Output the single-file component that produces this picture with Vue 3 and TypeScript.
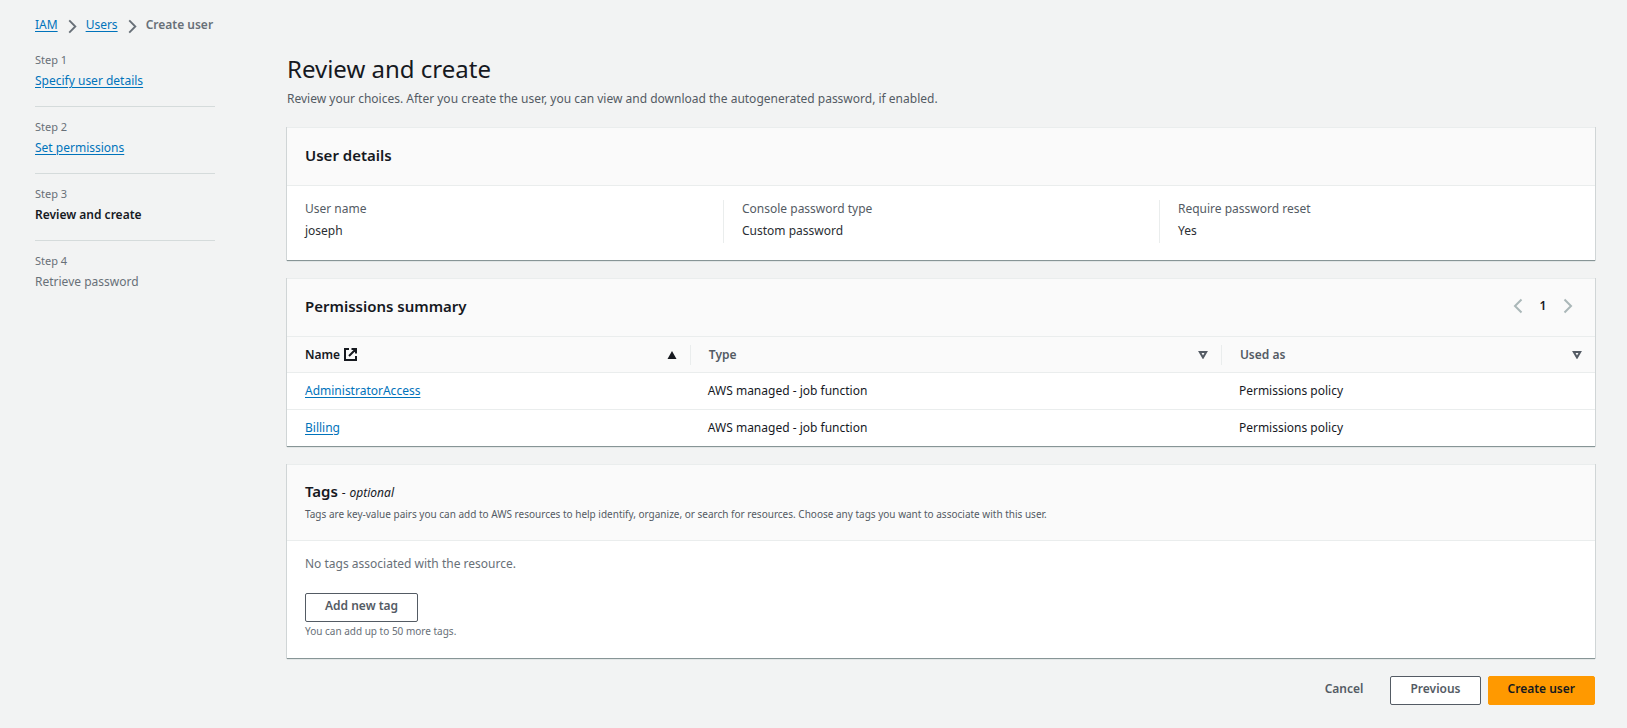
<script setup lang="ts">
interface Step {
  label: string
  title: string
  state: 'link' | 'current' | 'pending'
}

interface Policy {
  name: string
  type: string
  usedAs: string
}

const steps: Step[] = [
  { label: 'Step 1', title: 'Specify user details', state: 'link' },
  { label: 'Step 2', title: 'Set permissions', state: 'link' },
  { label: 'Step 3', title: 'Review and create', state: 'current' },
  { label: 'Step 4', title: 'Retrieve password', state: 'pending' },
]

const details = [
  { label: 'User name', value: 'joseph' },
  { label: 'Console password type', value: 'Custom password' },
  { label: 'Require password reset', value: 'Yes' },
]

const policies: Policy[] = [
  { name: 'AdministratorAccess', type: 'AWS managed - job function', usedAs: 'Permissions policy' },
  { name: 'Billing', type: 'AWS managed - job function', usedAs: 'Permissions policy' },
]
</script>

<template>
  <div class="page">
    <nav class="crumbs" aria-label="Breadcrumbs">
      <a href="#">IAM</a>
      <svg class="chev" viewBox="0 0 16 16" aria-hidden="true"><path d="M4.500 1.500 11 8l-6.500 6.500" /></svg>
      <a href="#">Users</a>
      <svg class="chev" viewBox="0 0 16 16" aria-hidden="true"><path d="M4.500 1.500 11 8l-6.500 6.500" /></svg>
      <span class="here">Create user</span>
    </nav>

    <div class="layout">
      <nav class="steps" aria-label="Steps">
        <div v-for="step in steps" :key="step.label" class="step">
          <span class="step-label">{{ step.label }}</span>
          <a v-if="step.state === 'link'" href="#">{{ step.title }}</a>
          <span v-else :class="step.state">{{ step.title }}</span>
        </div>
      </nav>

      <main class="main">
        <header class="intro">
          <h1>Review and create</h1>
          <p>Review your choices. After you create the user, you can view and download the autogenerated password, if enabled.</p>
        </header>

        <section class="card">
          <div class="card-head"><h2>User details</h2></div>
          <dl class="details">
            <div v-for="item in details" :key="item.label" class="detail">
              <dt>{{ item.label }}</dt>
              <dd>{{ item.value }}</dd>
            </div>
          </dl>
        </section>

        <section class="card">
          <div class="card-head">
            <h2>Permissions summary</h2>
            <div class="pager">
              <button type="button" class="plain" aria-label="Previous page" disabled>
                <svg viewBox="0 0 16 16"><path d="M11.500 1.500 5 8l6.500 6.500" /></svg>
              </button>
              <button type="button" class="plain page-no">1</button>
              <button type="button" class="plain" aria-label="Next page" disabled>
                <svg viewBox="0 0 16 16"><path d="M4.500 1.500 11 8l-6.500 6.500" /></svg>
              </button>
            </div>
          </div>
          <table>
            <colgroup>
              <col class="c-name" />
              <col class="c-type" />
              <col class="c-used" />
            </colgroup>
            <thead>
              <tr>
                <th scope="col" aria-sort="ascending" class="sorted">
                  <div class="th">
                    <span class="th-text">Name
                      <svg class="ext" viewBox="0 0 13 13" aria-hidden="true">
                        <path d="M5 1H1v11h11V8M7.500 1H12v4.500M12 1 5 8" />
                      </svg>
                    </span>
                    <svg class="sort" viewBox="0 0 10 8" aria-hidden="true"><path class="fill" d="M5 0l4.500 8h-9z" /></svg>
                  </div>
                </th>
                <th v-for="col in ['Type', 'Used as']" :key="col" scope="col">
                  <div class="th">
                    <span class="th-text">{{ col }}</span>
                    <svg class="sort" viewBox="0 0 10 8" aria-hidden="true"><path d="M1.800 1h6.400L5 6.500z" /></svg>
                  </div>
                </th>
              </tr>
            </thead>
            <tbody>
              <tr v-for="policy in policies" :key="policy.name">
                <td><a href="#">{{ policy.name }}</a></td>
                <td>{{ policy.type }}</td>
                <td>{{ policy.usedAs }}</td>
              </tr>
            </tbody>
          </table>
        </section>

        <section class="card">
          <div class="card-head tags-head">
            <h2>Tags <span class="dash">-</span> <i>optional</i></h2>
            <p>Tags are key-value pairs you can add to AWS resources to help identify, organize, or search for resources. Choose any tags you want to associate with this user.</p>
          </div>
          <div class="tags-body">
            <p class="empty">No tags associated with the resource.</p>
            <button type="button" class="btn">Add new tag</button>
            <p class="hint">You can add up to 50 more tags.</p>
          </div>
        </section>

        <footer class="actions">
          <button type="button" class="btn link">Cancel</button>
          <button type="button" class="btn">Previous</button>
          <button type="button" class="btn primary">Create user</button>
        </footer>
      </main>
    </div>
  </div>
</template>

<style>
body {
  background: #f2f3f3;
}
</style>

<style scoped>
.page {
  padding: 14px 32px 22px 35px;
  font-family: "Noto Sans", "Open Sans", sans-serif;
  font-size: 12px;
  line-height: 22px;
  color: #16191f;
}
h1, h2, p, dl, dd {
  margin: 0;
}
a {
  color: #0073bb;
  text-decoration: underline;
  text-underline-offset: 2px;
}
svg {
  display: block;
  fill: none;
  stroke: currentColor;
  stroke-width: 2;
}
.crumbs {
  display: flex;
  align-items: center;
  height: 22px;
  color: #687078;
}
.chev {
  width: 15px;
  height: 15px;
  margin: 2px 6px 0 7px;
}
.here {
  font-weight: 600;
}
.layout {
  display: flex;
  align-items: flex-start;
  gap: 72px;
}
.steps {
  flex: 0 0 180px;
  padding-top: 14px;
}
.step {
  display: flex;
  flex-direction: column;
  color: #687078;
  line-height: 22px;
}
.step + .step {
  margin-top: 14px;
  padding-top: 10px;
  border-top: 1px solid #d5dbdb;
}
.step-label {
  font-size: 11px;
  line-height: 20px;
}
.current {
  font-weight: 600;
  color: #16191f;
}
.main {
  flex: 1;
  min-width: 0;
  padding-top: 15px;
}
h1 {
  font-size: 24px;
  line-height: 36px;
  font-weight: 400;
}
.intro {
  margin-bottom: 16px;
}
.intro p {
  line-height: 24px;
  color: #545b64;
}
.card {
  margin-bottom: 17px;
  background: #fff;
  border-top: 1px solid #eaeded;
  border-bottom: 1px solid #879596;
  box-shadow: 1px 0 0 #d0d5d6, -1px 0 0 #d0d5d6, 0 1px 0 #e2e6e6;
}
.card-head {
  display: flex;
  justify-content: space-between;
  align-items: center;
  padding: 16px 18px 19px;
  background: #fafafa;
  border-bottom: 1px solid #eaeded;
}
h2 {
  font-size: 15px;
  line-height: 22px;
  font-weight: 600;
}
.details {
  display: grid;
  grid-template-columns: repeat(3, 1fr);
  padding: 14px 0 17px;
}
.detail {
  padding-left: 18px;
}
.detail + .detail {
  border-left: 1px solid #eaeded;
}
dt {
  color: #545b64;
  line-height: 18px;
}
dd {
  color: #2a2e33;
  line-height: 25px;
}
.pager {
  display: flex;
  align-items: center;
  gap: 11px;
  margin-right: 2px;
}
.plain {
  display: flex;
  justify-content: center;
  align-items: center;
  width: 14px;
  padding: 0;
  border: 0;
  background: none;
  color: #aab7b8;
  font: inherit;
}
.plain svg {
  flex: none;
  width: 16px;
  height: 16px;
}
.plain.page-no {
  font-weight: 600;
  color: #16191f;
}
table {
  width: 100%;
  table-layout: fixed;
  border-collapse: collapse;
}
.c-name {
  width: 30.8%;
}
.c-type {
  width: 40.6%;
}
.c-used {
  width: 28.6%;
}
th {
  height: 35px;
  padding: 0;
  background: #fafafa;
  text-align: left;
  font-weight: 600;
  color: #545b64;
}
.th {
  display: flex;
  align-items: center;
  justify-content: space-between;
  height: 20px;
  padding: 0 13px 0 18px;
}
th + th .th {
  border-left: 1px solid #eaeded;
}
.sorted {
  color: #16191f;
}
.th-text {
  display: flex;
  align-items: center;
  gap: 4px;
}
.ext {
  width: 13px;
  height: 13px;
}
.sort {
  width: 10px;
  height: 8px;
}
.sort .fill {
  fill: currentColor;
  stroke: none;
}
td {
  height: 35px;
  padding: 0 18px 1px;
  border-top: 1px solid #eaeded;
  line-height: 20px;
}
.tags-head {
  display: block;
  padding: 15px 18px 16px;
}
.tags-head i,
.dash {
  font-size: 12px;
  font-weight: 400;
}
.tags-head p {
  font-size: 10px;
  line-height: 20px;
  color: #545b64;
}
.tags-body {
  padding: 12px 18px 18px;
  color: #687078;
}
.empty {
  margin-bottom: 18px;
}
.btn {
  height: 29px;
  padding: 0 19px 4px;
  border: 1px solid #545b64;
  border-radius: 2px;
  background: #fff;
  color: #545b64;
  font: inherit;
  font-weight: 600;
}
.btn.primary {
  background: #ff9900;
  border-color: #ff9900;
  color: #16191f;
}
.btn.link {
  background: transparent;
  border-color: transparent;
}
.hint {
  font-size: 10px;
  line-height: 18px;
}
.actions {
  display: flex;
  justify-content: flex-end;
  gap: 7px;
}
</style>
